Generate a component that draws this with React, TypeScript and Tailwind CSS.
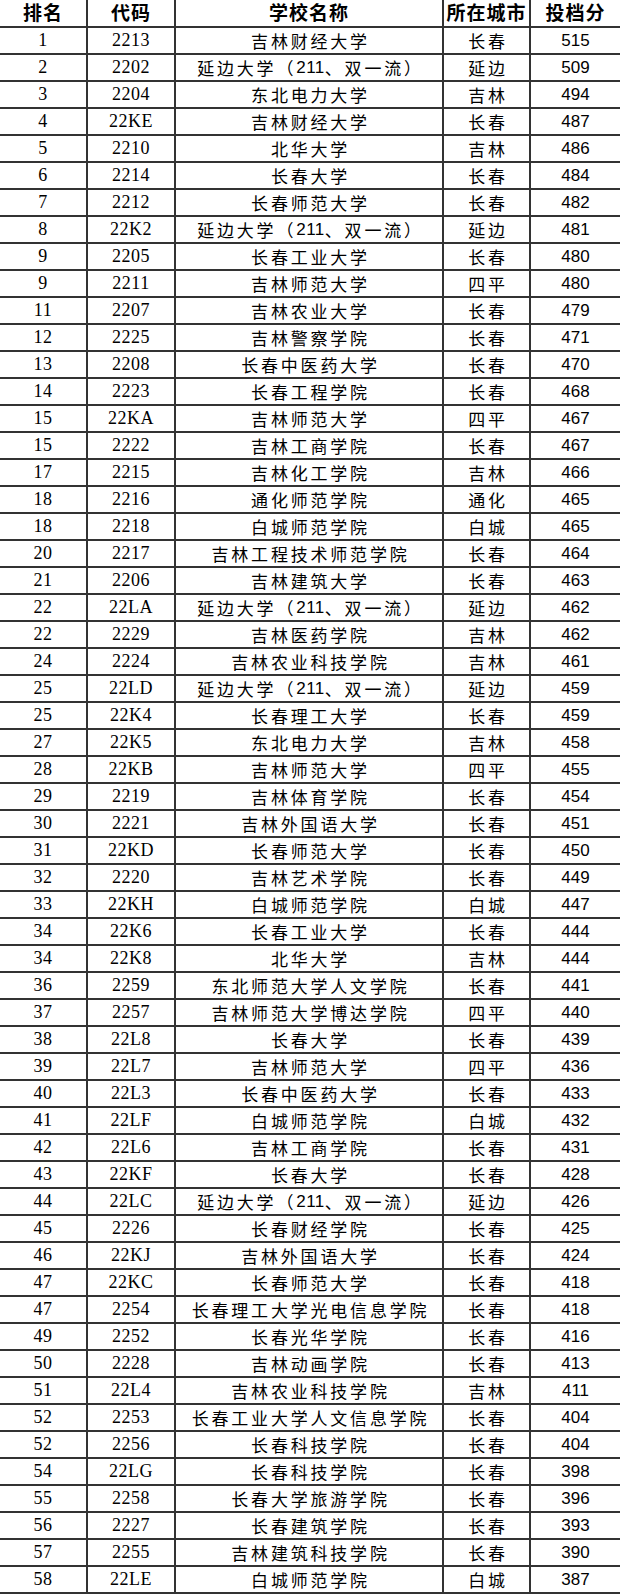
const rows: [string, string, string, string, string][] = [
  ["1", "2213", "吉林财经大学", "长春", "515"],
  ["2", "2202", "延边大学（211、双一流）", "延边", "509"],
  ["3", "2204", "东北电力大学", "吉林", "494"],
  ["4", "22KE", "吉林财经大学", "长春", "487"],
  ["5", "2210", "北华大学", "吉林", "486"],
  ["6", "2214", "长春大学", "长春", "484"],
  ["7", "2212", "长春师范大学", "长春", "482"],
  ["8", "22K2", "延边大学（211、双一流）", "延边", "481"],
  ["9", "2205", "长春工业大学", "长春", "480"],
  ["9", "2211", "吉林师范大学", "四平", "480"],
  ["11", "2207", "吉林农业大学", "长春", "479"],
  ["12", "2225", "吉林警察学院", "长春", "471"],
  ["13", "2208", "长春中医药大学", "长春", "470"],
  ["14", "2223", "长春工程学院", "长春", "468"],
  ["15", "22KA", "吉林师范大学", "四平", "467"],
  ["15", "2222", "吉林工商学院", "长春", "467"],
  ["17", "2215", "吉林化工学院", "吉林", "466"],
  ["18", "2216", "通化师范学院", "通化", "465"],
  ["18", "2218", "白城师范学院", "白城", "465"],
  ["20", "2217", "吉林工程技术师范学院", "长春", "464"],
  ["21", "2206", "吉林建筑大学", "长春", "463"],
  ["22", "22LA", "延边大学（211、双一流）", "延边", "462"],
  ["22", "2229", "吉林医药学院", "吉林", "462"],
  ["24", "2224", "吉林农业科技学院", "吉林", "461"],
  ["25", "22LD", "延边大学（211、双一流）", "延边", "459"],
  ["25", "22K4", "长春理工大学", "长春", "459"],
  ["27", "22K5", "东北电力大学", "吉林", "458"],
  ["28", "22KB", "吉林师范大学", "四平", "455"],
  ["29", "2219", "吉林体育学院", "长春", "454"],
  ["30", "2221", "吉林外国语大学", "长春", "451"],
  ["31", "22KD", "长春师范大学", "长春", "450"],
  ["32", "2220", "吉林艺术学院", "长春", "449"],
  ["33", "22KH", "白城师范学院", "白城", "447"],
  ["34", "22K6", "长春工业大学", "长春", "444"],
  ["34", "22K8", "北华大学", "吉林", "444"],
  ["36", "2259", "东北师范大学人文学院", "长春", "441"],
  ["37", "2257", "吉林师范大学博达学院", "四平", "440"],
  ["38", "22L8", "长春大学", "长春", "439"],
  ["39", "22L7", "吉林师范大学", "四平", "436"],
  ["40", "22L3", "长春中医药大学", "长春", "433"],
  ["41", "22LF", "白城师范学院", "白城", "432"],
  ["42", "22L6", "吉林工商学院", "长春", "431"],
  ["43", "22KF", "长春大学", "长春", "428"],
  ["44", "22LC", "延边大学（211、双一流）", "延边", "426"],
  ["45", "2226", "长春财经学院", "长春", "425"],
  ["46", "22KJ", "吉林外国语大学", "长春", "424"],
  ["47", "22KC", "长春师范大学", "长春", "418"],
  ["47", "2254", "长春理工大学光电信息学院", "长春", "418"],
  ["49", "2252", "长春光华学院", "长春", "416"],
  ["50", "2228", "吉林动画学院", "长春", "413"],
  ["51", "22L4", "吉林农业科技学院", "吉林", "411"],
  ["52", "2253", "长春工业大学人文信息学院", "长春", "404"],
  ["52", "2256", "长春科技学院", "长春", "404"],
  ["54", "22LG", "长春科技学院", "长春", "398"],
  ["55", "2258", "长春大学旅游学院", "长春", "396"],
  ["56", "2227", "长春建筑学院", "长春", "393"],
  ["57", "2255", "吉林建筑科技学院", "长春", "390"],
  ["58", "22LE", "白城师范学院", "白城", "387"],
];

const cjk = "font-['Noto_Sans_CJK_SC',sans-serif]";
const cell = "flex items-center justify-center border-b-2 border-[#333333] h-[27px]";

function Name({ text }: { text: string }) {
  const parts = text.split("211");
  if (parts.length === 1) return <>{text}</>;
  return (
    <>
      {parts[0]}
      <span className="font-['Liberation_Sans',sans-serif] tracking-[0.5px]">211</span>
      {parts[1]}
    </>
  );
}

export default function App() {
  return (
    <div className="w-[620px] bg-white text-black">
      <div className="grid grid-cols-[88px_88px_268px_87px_89px]">
        {["排名", "代码", "学校名称", "所在城市", "投档分"].map((h, i) => (
          <div
            key={h}
            className={`flex items-center justify-center border-b-2 border-[#333333] h-[28px] pb-[2px] ${cjk} text-[19px] font-bold tracking-[1px] ${i < 4 ? "border-r-2" : ""}`}
          >
            {h}
          </div>
        ))}
        {rows.map((r, idx) => (
          <div key={idx} className="contents">
            <div className={`${cell} border-r-2 font-['Liberation_Serif',serif] text-[18px] tracking-[0.5px]`}>{r[0]}</div>
            <div className={`${cell} border-r-2 font-['Liberation_Serif',serif] text-[18px] tracking-[0.5px]`}>{r[1]}</div>
            <div className={`${cell} border-r-2 ${cjk} text-[17px] tracking-[2.8px] pl-[3px] whitespace-nowrap`}>
              <Name text={r[2]} />
            </div>
            <div className={`${cell} border-r-2 ${cjk} text-[17px] tracking-[2.8px] pl-[3px]`}>{r[3]}</div>
            <div className={`${cell} font-['Liberation_Sans',sans-serif] text-[17px]`}>{r[4]}</div>
          </div>
        ))}
      </div>
    </div>
  );
}
